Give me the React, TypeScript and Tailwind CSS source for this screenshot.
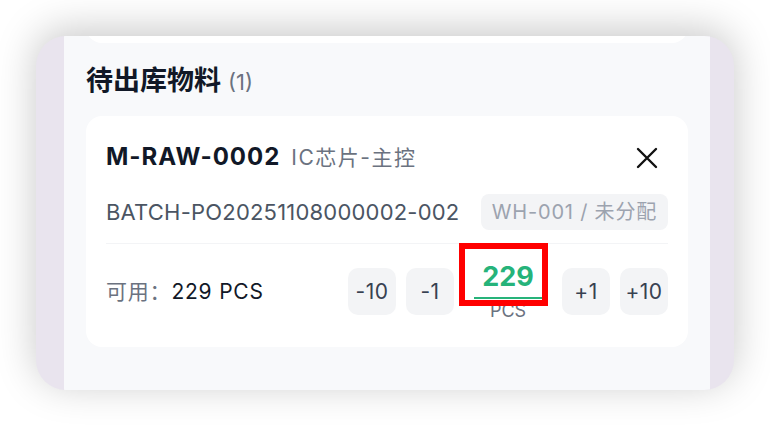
import { useState } from 'react';

const steps = [-10, -1, 1, 10];

function StepButton({ delta, onStep }: { delta: number; onStep: (d: number) => void }) {
  return (
    <button
      onClick={() => onStep(delta)}
      className="mt-[12px] flex h-[47px] w-[48px] items-center justify-center rounded-[10px] bg-[#f3f4f6] text-[21px] tracking-[0.5px] text-[#374151]"
    >
      {delta > 0 ? `+${delta}` : `-${Math.abs(delta)}`}
    </button>
  );
}

function CloseIcon() {
  return (
    <svg viewBox="0 0 22 22" className="h-[22px] w-[22px]" fill="none" stroke="#111" strokeWidth="2.4" strokeLinecap="round">
      <path d="M2 2 L20 20 M20 2 L2 20" />
    </svg>
  );
}

export default function App() {
  const [qty, setQty] = useState(229);
  const available = 229;

  const step = (d: number) => setQty((q) => Math.min(available, Math.max(0, q + d)));

  return (
    <div
      className="h-[426px] w-[770px] bg-white p-[36px]"
      style={{ fontFamily: 'Inter, "Noto Sans CJK SC", sans-serif' }}
    >
      <div className="flex h-[354px] w-[698px] overflow-hidden rounded-[30px] bg-[#e9e4ee] pl-[28px] pr-[24px] shadow-[0_-6px_40px_rgba(0,0,0,0.22)]">
        <div className="flex-1 bg-[#f8f9fb] px-[22px]">
          {/* previous card, mostly scrolled away */}
          <div className="-mt-[33px] h-[40px] rounded-[16px] bg-white" />

          <div className="mt-[21px] flex items-baseline gap-[7px] leading-[34px]">
            <h2 className="text-[27px] font-bold text-[#111827]">待出库物料</h2>
            <span className="text-[22px] text-[#6b7280]">(1)</span>
          </div>

          <div className="mt-[17px] rounded-[16px] bg-white px-[20px] pt-[22px] pb-[25px]">
            <div className="flex h-[38px] items-center justify-between">
              <div className="flex items-baseline gap-[11px]">
                <span className="text-[24px] font-bold tracking-[1px] text-[#111827]">M-RAW-0002</span>
                <span className="text-[21px] tracking-[1.5px] text-[#6b7280]">IC芯片-主控</span>
              </div>
              <button className="mr-[10px] mt-[2px]">
                <CloseIcon />
              </button>
            </div>

            <div className="mt-[18px] flex h-[36px] items-center justify-between">
              <span className="text-[22px] tracking-[0.2px] text-[#4b5563]">BATCH-PO20251108000002-002</span>
              <span className="flex h-[36px] items-center rounded-[8px] bg-[#f3f4f6] px-[11px] text-[20px] tracking-[0.8px] text-[#9ca3af]">
                WH-001 / 未分配
              </span>
            </div>

            <div className="mt-[13px] h-px bg-[#f3f4f6]" />

            <div className="flex items-start justify-between pt-[12px]">
              <div className="mt-[22px] text-[21px] leading-[28px] tracking-[0.8px]">
                <span className="text-[#6b7280]">可用：</span>
                <span className="text-[#111827]">{available} PCS</span>
              </div>

              <div className="flex items-start gap-[10px]">
                <StepButton delta={steps[0]} onStep={step} />
                <StepButton delta={steps[1]} onStep={step} />
                <div className="relative flex w-[88px] flex-col items-center">
                  <input
                    value={qty}
                    onChange={(e) => setQty(Number(e.target.value.replace(/\D/g, '')) || 0)}
                    className="h-[43px] w-[68px] border-b-2 border-[#26b37a] bg-transparent text-center text-[27px] font-bold text-[#26b37a] outline-none"
                  />
                  <span className="mt-[1px] text-[18px] leading-[22px] text-[#6b7280]">PCS</span>
                  {/* highlight annotation */}
                  <div className="pointer-events-none absolute -left-[5px] -top-[13px] h-[63px] w-[89px] border-[6px] border-[#ff0000]" />
                </div>
                <StepButton delta={steps[2]} onStep={step} />
                <StepButton delta={steps[3]} onStep={step} />
              </div>
            </div>
          </div>
        </div>
      </div>
    </div>
  );
}
